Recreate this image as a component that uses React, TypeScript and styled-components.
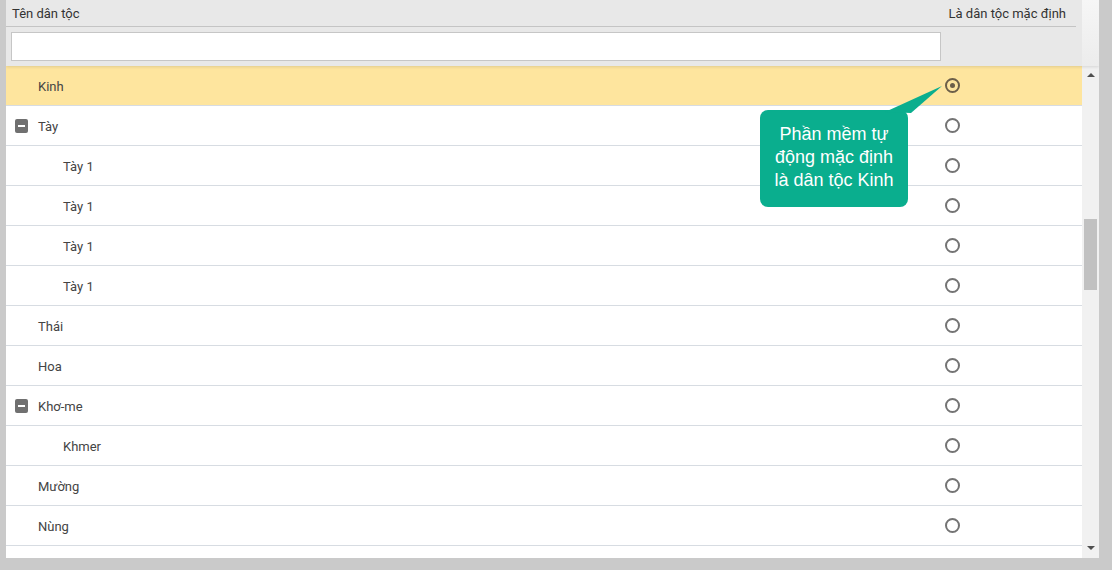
import styled, { createGlobalStyle } from 'styled-components';

type Row = { name: string; level: 0 | 1; group?: boolean; selected?: boolean };

const rows: Row[] = [
  { name: 'Kinh', level: 0, selected: true },
  { name: 'Tày', level: 0, group: true },
  { name: 'Tày 1', level: 1 },
  { name: 'Tày 1', level: 1 },
  { name: 'Tày 1', level: 1 },
  { name: 'Tày 1', level: 1 },
  { name: 'Thái', level: 0 },
  { name: 'Hoa', level: 0 },
  { name: 'Khơ-me', level: 0, group: true },
  { name: 'Khmer', level: 1 },
  { name: 'Mường', level: 0 },
  { name: 'Nùng', level: 0 },
  // last row is scrolled mostly out of view, only its radio peeks in
  { name: '', level: 0 },
];

const GlobalStyle = createGlobalStyle`
  html, body {
    margin: 0;
    padding: 0;
    background: #cacaca;
  }
  body {
    font-family: Roboto, "Liberation Sans", Arial, sans-serif;
  }
`;

export default function App() {
  return (
    <>
      <GlobalStyle />
      <Page>
        <Panel>
          <Header>
            <HeaderMain>
              <TitleRow>
                <div className="name">Tên dân tộc</div>
                <div className="default">Là dân tộc mặc định</div>
              </TitleRow>
              <FilterRow>
                <FilterInput type="text" />
              </FilterRow>
            </HeaderMain>
            <HeaderGutter />
          </Header>

          <Body>
            <Rows>
              {rows.map((r, i) => (
                <GridRow key={i} $selected={r.selected}>
                  <NameCell $indent={r.level === 1 ? 57 : r.group ? 9 : 32}>
                    {r.group && <Collapse />}
                    {r.name}
                  </NameCell>
                  <RadioCell>
                    <Radio $checked={r.selected} />
                  </RadioCell>
                </GridRow>
              ))}
            </Rows>
            <ScrollBar>
              <Arrow $dir="up" />
              <Thumb />
              <Arrow $dir="down" />
            </ScrollBar>
          </Body>

          <Callout>
            <svg width="70" height="40" viewBox="0 0 70 40">
              <polygon points="0,26 57,0 26,27" fill="#0aae8e" />
            </svg>
            <div className="text">
              Phần mềm tự
              <br />
              động mặc định
              <br />
              là dân tộc Kinh
            </div>
          </Callout>
        </Panel>
      </Page>
    </>
  );
}

const Page = styled.div`
  height: 570px;
  padding: 0 13px 0 6px;
  box-sizing: border-box;
  background: #cacaca;
`;

const Panel = styled.div`
  position: relative;
  display: flex;
  flex-direction: column;
  width: 1093px;
  height: 558px;
  background: #fff;
  overflow: hidden;
`;

const Header = styled.div`
  display: flex;
  height: 66px;
  flex-shrink: 0;
  background: #e8e8e8;
  box-shadow: 0 1px 3px rgba(0, 0, 0, 0.12);
  position: relative;
  z-index: 1;
`;

const HeaderMain = styled.div`
  flex: 1;
  display: flex;
  flex-direction: column;
`;

const HeaderGutter = styled.div`
  width: 17px;
  background: linear-gradient(180deg, #f6f6f6, #ececec);
`;

const TitleRow = styled.div`
  display: flex;
  align-items: center;
  height: 27px;
  margin-right: 6px;
  border-bottom: 1px solid #c4c4c4;
  box-sizing: border-box;
  font-size: 13px;
  color: #333;

  .name {
    flex: 1;
    padding-left: 6px;
  }

  .default {
    padding-right: 10px;
  }
`;

const FilterRow = styled.div`
  display: flex;
  align-items: center;
  padding: 5px 0 0 5px;
`;

const FilterInput = styled.input`
  width: 930px;
  height: 29px;
  box-sizing: border-box;
  border: 1px solid #c6c6c6;
  background: #fff;
  outline: none;
`;

const Body = styled.div`
  flex: 1;
  display: flex;
  min-height: 0;
`;

const Rows = styled.div`
  flex: 1;
  overflow: hidden;
`;

const GridRow = styled.div<{ $selected?: boolean }>`
  display: flex;
  align-items: center;
  height: 40px;
  padding-top: 1px;
  border-bottom: 1px solid #d7dce2;
  box-sizing: border-box;
  background: ${(p) => (p.$selected ? '#fee59e' : '#fff')};
  font-size: 13px;
  color: #444;
`;

const NameCell = styled.div<{ $indent: number }>`
  flex: 1;
  display: flex;
  align-items: center;
  gap: 10px;
  padding-left: ${(p) => p.$indent}px;
`;

const Collapse = styled.span`
  position: relative;
  width: 13px;
  height: 14px;
  margin-top: -1px;
  border-radius: 2px;
  background: #707070;

  &::after {
    content: '';
    position: absolute;
    left: 3px;
    right: 3px;
    top: 6px;
    height: 2px;
    background: #fff;
  }
`;

const RadioCell = styled.div`
  width: 137px;
  display: flex;
  align-items: center;
  margin-top: -1px;
`;

const Radio = styled.span<{ $checked?: boolean }>`
  width: 15px;
  height: 15px;
  box-sizing: border-box;
  border-radius: 50%;
  border: 2px solid ${(p) => (p.$checked ? '#6c5f49' : '#747474')};
  display: flex;
  align-items: center;
  justify-content: center;

  &::after {
    content: '';
    width: 5px;
    height: 5px;
    border-radius: 50%;
    background: ${(p) => (p.$checked ? '#6c5f49' : 'transparent')};
  }
`;

const ScrollBar = styled.div`
  width: 17px;
  display: flex;
  flex-direction: column;
  align-items: center;
  background: #f1f1f1;
`;

const Arrow = styled.span<{ $dir: 'up' | 'down' }>`
  width: 0;
  height: 0;
  border-left: 4px solid transparent;
  border-right: 4px solid transparent;
  ${(p) =>
    p.$dir === 'up'
      ? 'border-bottom: 4px solid #505050; margin-top: 7px;'
      : 'border-top: 4px solid #505050; margin-top: auto; margin-bottom: 8px;'}
`;

const Thumb = styled.div`
  width: 13px;
  height: 71px;
  margin-top: 142px;
  background: #c1c1c1;
`;

const Callout = styled.div`
  position: absolute;
  left: 754px;
  top: 110px;
  width: 148px;
  height: 97px;
  border-radius: 8px;
  background: #0aae8e;

  svg {
    position: absolute;
    left: 125px;
    top: -24px;
  }

  .text {
    position: relative;
    padding-top: 13px;
    text-align: center;
    font-family: "Liberation Sans", Arial, sans-serif;
    font-size: 18px;
    line-height: 23px;
    color: #fff;
  }
`;
